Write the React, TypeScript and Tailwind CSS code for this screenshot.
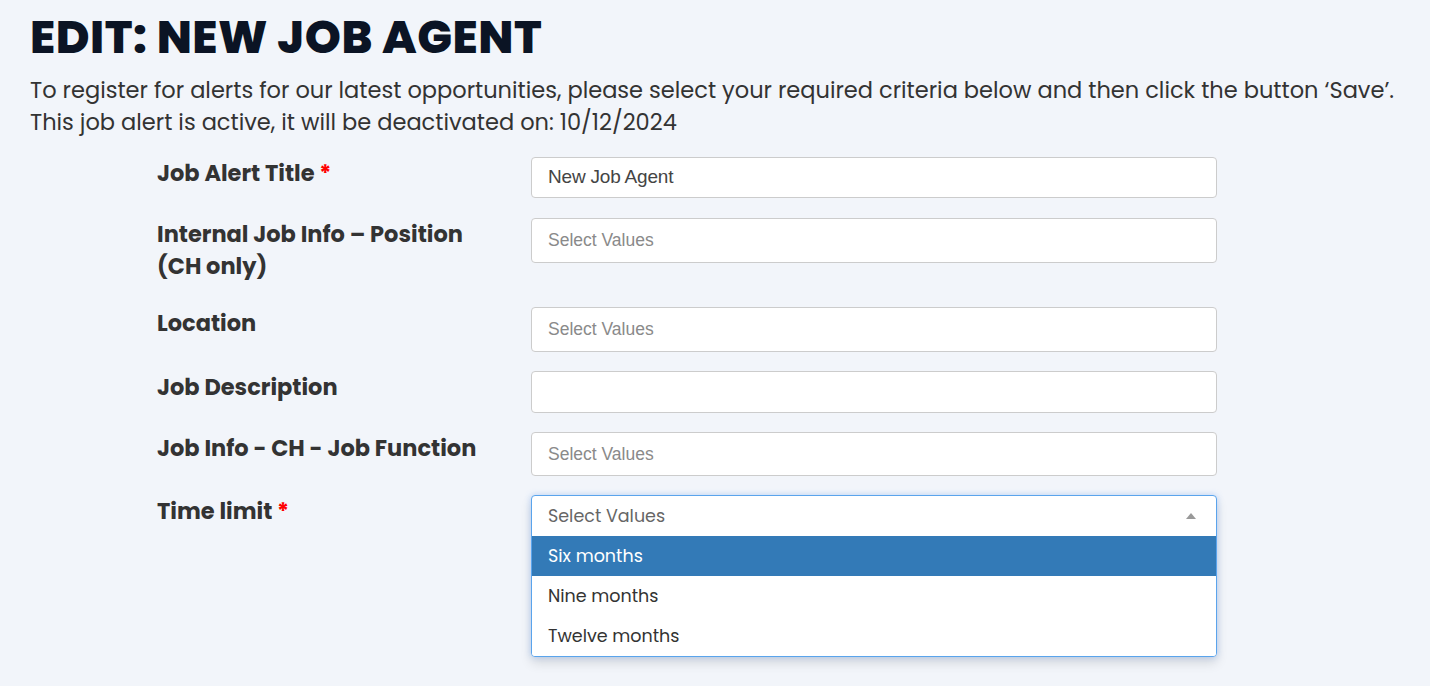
import React from 'react';

const poppins = "font-['Poppins','Open_Sans',sans-serif]";
const arial = "font-['Liberation_Sans',Arial,sans-serif]";

function Label({ text, required }: { text: React.ReactNode; required?: boolean }) {
  return (
    <div className={`${poppins} w-[374px] shrink-0 text-[22.5px] font-bold leading-[32px] text-[#333]`}>
      {text}
      {required && <span className="text-[#ff0000]"> *</span>}
    </div>
  );
}

function Field({ value, placeholder, h = 'h-[41px]' }: { value?: string; placeholder?: string; h?: string }) {
  return (
    <div
      className={`${arial} ${h} w-[686px] rounded-[4px] border border-[#cccccc] bg-white px-4 flex items-center`}
    >
      {value ? (
        <span className="text-[19px] text-[#444] tracking-[-0.2px]">{value}</span>
      ) : (
        <span className="text-[17.5px] text-[#8a8a8a]">{placeholder}</span>
      )}
    </div>
  );
}

export default function App() {
  const options = ['Six months', 'Nine months', 'Twelve months'];
  return (
    <div className={`${poppins} min-h-[686px] bg-[#f2f5fa] px-[30px] pt-[12px]`}>
      <h1 className="text-[46px] font-extrabold uppercase leading-[50px] tracking-[0.5px] text-[#0b1424]">
        Edit: New Job Agent
      </h1>
      <p className="mt-[12px] text-[22.5px] leading-[32px] text-[#333]">
        To register for alerts for our latest opportunities, please select your required criteria below and then click
        the button ‘Save’.
        <br />
        This job alert is active, it will be deactivated on: 10/12/2024
      </p>

      <div className="ml-[127px] mt-[19px] flex flex-col">
        <div className="flex">
          <Label text="Job Alert Title" required />
          <Field value="New Job Agent" />
        </div>

        <div className="mt-[20px] flex">
          <Label text={<>Internal Job Info – Position<br />(CH only)</>} />
          <Field placeholder="Select Values" h="h-[45px]" />
        </div>

        <div className="mt-[25px] flex">
          <Label text="Location" />
          <Field placeholder="Select Values" h="h-[45px]" />
        </div>

        <div className="mt-[19px] flex">
          <Label text="Job Description" />
          <Field h="h-[42px]" />
        </div>

        <div className="mt-[19px] flex">
          <Label text="Job Info - CH - Job Function" />
          <Field placeholder="Select Values" h="h-[44px]" />
        </div>

        <div className="mt-[19px] flex">
          <Label text="Time limit" required />
          <div className="w-[686px] rounded-[4px] border border-[#5aa4ec] bg-white shadow-[0_0_6px_rgba(88,151,251,0.35),0_6px_12px_rgba(0,0,0,0.12)] overflow-hidden">
            <div className="flex h-[40px] items-center justify-between px-4">
              <span className="text-[17.5px] text-[#666]">Select Values</span>
              <svg width="10" height="6" viewBox="0 0 10 6" className="mr-[4px]">
                <path d="M0 6 L5 0 L10 6 Z" fill="#999" />
              </svg>
            </div>
            {options.map((o, i) => (
              <div
                key={o}
                className={`flex h-[40px] items-center px-4 text-[17.5px] ${
                  i === 0 ? 'bg-[#337ab7] text-white' : 'bg-white text-[#333]'
                }`}
              >
                {o}
              </div>
            ))}
          </div>
        </div>
      </div>
    </div>
  );
}
